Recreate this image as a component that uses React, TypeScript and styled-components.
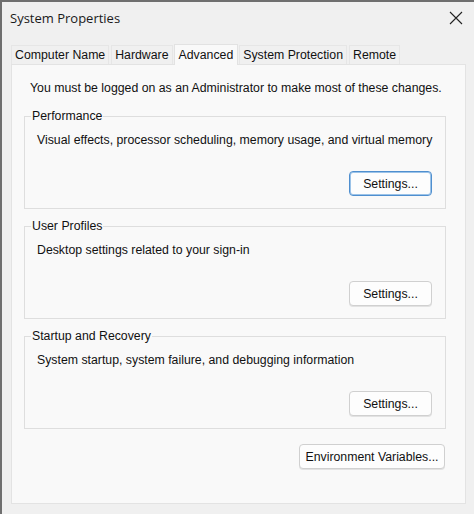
import React from "react";
import styled, { createGlobalStyle } from "styled-components";

const Global = createGlobalStyle`
  html, body { margin: 0; padding: 0; background: #f0f0f0; }
  * { box-sizing: border-box; }
`;

const Window = styled.div`
  width: 474px;
  height: 514px;
  background: #f0f0f0;
  border-top: 2px solid #6f6f6f;
  border-left: 2px solid #6f6f6f;
  display: flex;
  flex-direction: column;
  font-family: "Liberation Sans", Arial, sans-serif;
  font-size: 12.3px;
  color: #111;
`;

const TitleBar = styled.div`
  height: 32px;
  display: flex;
  align-items: center;
  justify-content: space-between;
  padding: 0 11px 0 8px;
`;

const Title = styled.span`
  font-family: "Open Sans", "Noto Sans", sans-serif;
  font-size: 13px;
  color: #1a1a1a;
`;

const Close = styled.button`
  border: none;
  background: none;
  padding: 0;
  width: 14px;
  height: 14px;
  display: flex;
  color: #222;
`;

const TabStrip = styled.div`
  display: flex;
  align-items: flex-end;
  gap: 2px;
  height: 21px;
  margin: 9px 0 0 9px;
`;

const Tab = styled.div<{ $active?: boolean }>`
  height: ${(p) => (p.$active ? 21 : 19)}px;
  padding: 0 ${(p) => (p.$active ? 4 : 3)}px;
  margin: 0 ${(p) => (p.$active ? -1 : 0)}px ${(p) => (p.$active ? -1 : 0)}px;
  display: flex;
  align-items: center;
  background: ${(p) => (p.$active ? "#f9f9f9" : "#f0f0f0")};
  border: 1px solid ${(p) => (p.$active ? "#e2e2e2" : "#e6e6e6")};
  border-bottom: none;
  position: relative;
  z-index: ${(p) => (p.$active ? 1 : 0)};
  white-space: nowrap;
`;

const Panel = styled.div`
  margin: 0 0 0 9px;
  width: 455px;
  height: 440px;
  background: #f9f9f9;
  border: 1px solid #e3e3e3;
  padding: 15px 19px 0 12px;
  display: flex;
  flex-direction: column;
`;

const Notice = styled.div`
  line-height: 16px;
  padding-left: 6px;
  margin-bottom: 12px;
  white-space: nowrap;
`;

const Group = styled.fieldset`
  margin: 0 0 9px 0;
  border: 1px solid #dedede;
  padding: 8px 13px 12px 12px;
  display: flex;
  flex-direction: column;
  min-width: 0;
`;

const Legend = styled.legend`
  line-height: 16px;
  padding: 0 1px;
  margin-left: -6px;
`;

const Desc = styled.div`
  line-height: 16px;
  white-space: nowrap;
`;

const Button = styled.button<{ $focused?: boolean; $wide?: boolean }>`
  align-self: flex-end;
  margin-top: ${(p) => (p.$wide ? 0 : 23)}px;
  width: ${(p) => (p.$wide ? 146 : 83)}px;
  height: 25px;
  font-family: "Liberation Sans", Arial, sans-serif;
  font-size: 12.3px;
  color: #111;
  background: #fdfdfd;
  border: 1px solid ${(p) => (p.$focused ? "#4f8fcf" : "#d0d0d0")};
  box-shadow: ${(p) => (p.$focused ? "inset 0 0 0 1px #9cc3e8" : "0 1px 0 #e2e2e2")};
  border-radius: 4px;
  padding: 0;
`;

const Footer = styled.div`
  display: flex;
  justify-content: flex-end;
  margin-top: 6px;
  padding-right: 1px;
`;

const groups = [
  {
    title: "Performance",
    desc: "Visual effects, processor scheduling, memory usage, and virtual memory",
    focused: true,
  },
  { title: "User Profiles", desc: "Desktop settings related to your sign-in" },
  {
    title: "Startup and Recovery",
    desc: "System startup, system failure, and debugging information",
  },
];

const tabs = ["Computer Name", "Hardware", "Advanced", "System Protection", "Remote"];

export default function App() {
  return (
    <>
      <Global />
      <Window>
        <TitleBar>
          <Title>System Properties</Title>
          <Close aria-label="Close">
            <svg width="14" height="14" viewBox="0 0 14 14">
              <path d="M1 1 L13 13 M13 1 L1 13" stroke="currentColor" strokeWidth="1.1" fill="none" />
            </svg>
          </Close>
        </TitleBar>
        <TabStrip>
          {tabs.map((t) => (
            <Tab key={t} $active={t === "Advanced"}>
              {t}
            </Tab>
          ))}
        </TabStrip>
        <Panel>
          <Notice>You must be logged on as an Administrator to make most of these changes.</Notice>
          {groups.map((g) => (
            <Group key={g.title}>
              <Legend>{g.title}</Legend>
              <Desc>{g.desc}</Desc>
              <Button $focused={g.focused}>Settings...</Button>
            </Group>
          ))}
          <Footer>
            <Button $wide>Environment Variables...</Button>
          </Footer>
        </Panel>
      </Window>
    </>
  );
}
